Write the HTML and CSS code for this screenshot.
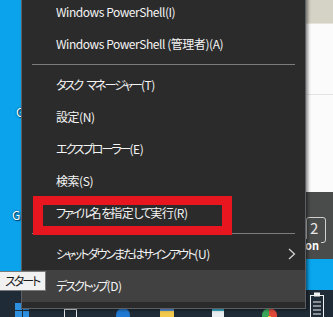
FILE: index.html
```html
<!DOCTYPE html>
<html lang="ja">
	<head>
		<meta charset="UTF-8" />
		<title>Start context menu</title>
		<link rel="stylesheet" href="styles.css">
	</head>

	<body>
		<div class="desktop">
			<div class="desk-label first">G</div>
			<div class="desk-label second">Ge</div>

			<div class="back-window">
				<div class="bw-top"></div>
				<div class="bw-page"></div>
				<div class="bw-photo">
					<span class="bw-card">2</span>
					<span class="bw-caption">on</span>
				</div>
				<div class="bw-band"></div>
			</div>

			<div class="taskbar">
				<span class="tb-icon win"><i></i><i></i><i></i><i></i></span>
				<span class="tb-icon view"></span>
				<span class="tb-icon edge"></span>
				<span class="tb-icon folder"></span>
				<span class="tb-icon store"></span>
				<span class="tb-icon chrome"></span>
				<span class="tb-icon clip">
					<svg width="16" height="27" viewBox="0 0 16 27">
						<rect x="1.5" y="4.5" width="13" height="22" fill="none" stroke="#f2f2f2" />
						<rect x="5" y="1.5" width="6" height="4" fill="#f2f2f2" />
						<path d="M4 11h8M4 15h8M4 19h8M4 23h8" stroke="#f2f2f2" />
					</svg>
				</span>
			</div>

			<div class="menu">
				<div class="item">Windows PowerShell(I)</div>
				<div class="item">Windows PowerShell (管理者)(A)</div>
				<div class="sep"></div>
				<div class="item"><span class="kana">タスク</span> <span class="kana word">マネージャー</span>(T)</div>
				<div class="item">設定(N)</div>
				<div class="item"><span class="kana">エクスプローラー</span>(E)</div>
				<div class="item">検索(S)</div>
				<div class="item"><span class="kana">ファイル</span>名<span class="kana">を</span>指定<span class="kana">して</span>実行(R)</div>
				<div class="sep"></div>
				<div class="item has-sub">
					<span><span class="kana">シャットダウンまたはサインアウト</span>(U)</span>
					<svg class="chev" width="8" height="12" viewBox="0 0 8 12">
						<path d="M1 1l5.5 5-5.5 5" fill="none" stroke="#d8d8d8" stroke-width="1.2" />
					</svg>
				</div>
				<div class="item active"><span class="kana">デスクトップ</span>(D)</div>
			</div>

			<div class="mark"></div>
			<div class="tooltip"><span class="kana">スタート</span></div>
		</div>
	</body>
</html>
```

FILE: styles.css
```css
:root {
	--desk-blue:  #0ba4ec;
	--menu-bg:    #2b2b2b;
	--menu-hover: #414141;
	--menu-fg:    #f4f4f4;
	--rule:       #7c7c7c;
	--mark-red:   #e8161f;
	--taskbar:    #1f2b36;
}

html, body {
	margin: 0;
	padding: 0;
}

body {
	font-family: "Noto Sans CJK JP", "Noto Sans", sans-serif;
	font-feature-settings: "palt";
}

/* Yu Gothic UI kana are much narrower than Noto's */
.kana {
	letter-spacing: -2px;
}
.kana.word {
	margin-left: 2px;
}

.desktop {
	position: relative;
	width: 333px;
	height: 317px;
	overflow: hidden;
	background: var(--desk-blue);
}

/* desktop icon captions, cut off by the menu */
.desk-label {
	position: absolute;
	font-size: 12px;
	line-height: 14px;
	color: #fff;
	text-shadow: 0 0 2px #003a60, 1px 1px 1px #003a60;
}
.desk-label.first {
	left: 16px;
	top: 105px;
}
.desk-label.second {
	left: 12px;
	top: 208px;
}

/* window behind the menu on the right */
.back-window {
	position: absolute;
	left: 300px;
	top: 0;
	width: 33px;
	height: 290px;
	display: flex;
	flex-direction: column;
}
.bw-top {
	height: 23px;
	background: #d5d2c6;
	border-bottom: 1px solid #e6e4dc;
}
.bw-page {
	height: 168px;
	background: #fbfbfb;
	background-image: linear-gradient(#e3e3e3, #e3e3e3);
	background-size: 100% 1px;
	background-position: 0 70px;
	background-repeat: no-repeat;
}
.bw-photo {
	height: 67px;
	background: #4a4b4b;
	position: relative;
}
.bw-card {
	position: absolute;
	left: 6px;
	top: 25px;
	width: 20px;
	height: 26px;
	border: 1px solid #d0d0d0;
	border-radius: 3px;
	color: #e6e6e6;
	font-size: 15px;
	line-height: 20px;
	padding-left: 3px;
	box-sizing: border-box;
}
.bw-caption {
	position: absolute;
	left: 5px;
	top: 47px;
	color: #fff;
	font-size: 11px;
	font-weight: bold;
	line-height: 12px;
	background: #4a4b4b;
	padding-right: 2px;
}
.bw-band {
	flex-grow: 1;
	background: #0aa6ee;
}

.taskbar {
	position: absolute;
	left: 0;
	right: 0;
	bottom: 0;
	height: 27px;
	background: var(--taskbar);
}
.tb-icon {
	position: absolute;
	display: block;
}
.tb-icon.win {
	left: 15px;
	top: 13px;
	width: 14px;
	height: 14px;
	display: grid;
	grid-template-columns: 1fr 1fr;
	gap: 1px;
}
.tb-icon.win i {
	background: #2d8fe0;
}
.tb-icon.view {
	left: 64px;
	top: 19px;
	width: 11px;
	height: 10px;
	border: 1px solid #e8e8e8;
}
.tb-icon.edge {
	left: 116px;
	top: 18px;
	width: 14px;
	height: 14px;
	border-radius: 50%;
	background: #1f78d1;
}
.tb-icon.folder {
	left: 160px;
	top: 18px;
	width: 14px;
	height: 12px;
	background: #f2c94c;
	border-top: 3px solid #5a8fd8;
}
.tb-icon.store {
	left: 212px;
	top: 18px;
	width: 12px;
	height: 12px;
	background: #e9eef2;
	border-top: 3px solid #3ab0c9;
}
.tb-icon.chrome {
	left: 262px;
	top: 18px;
	width: 15px;
	height: 15px;
	border-radius: 50%;
	background: conic-gradient(#e04a3a 0 120deg, #f2c12e 120deg 240deg, #3aa65a 240deg);
}
.tb-icon.clip {
	left: 309px;
	top: 1px;
}

/* the context menu itself */
.menu {
	position: absolute;
	left: 21px;
	top: -5px;
	width: 283px;
	padding-bottom: 6px;
	background: var(--menu-bg);
	border: 1px solid #5c5f63;
	box-shadow: 2px 1px 3px rgba(0, 0, 0, .45);
	color: var(--menu-fg);
	font-size: 12px;
	letter-spacing: -0.45px;
}
.item {
	height: 32px;
	line-height: 32px;
	padding-left: 34px;
	padding-right: 9px;
	white-space: nowrap;
}
.item.has-sub {
	display: flex;
	align-items: center;
	justify-content: space-between;
}
.item.active {
	background: var(--menu-hover);
}
.chev {
	display: block;
}
.sep {
	height: 9px;
	background: linear-gradient(var(--rule), var(--rule)) 10px 4px / calc(100% - 20px) 1px no-repeat;
}

/* red annotation box drawn over the screenshot */
.mark {
	position: absolute;
	left: 33px;
	top: 196px;
	width: 199px;
	height: 39px;
	box-sizing: border-box;
	border: 9px solid var(--mark-red);
	border-left-width: 10px;
	border-right-width: 10px;
}

.tooltip {
	position: absolute;
	left: 0;
	top: 271px;
	width: 46px;
	height: 20px;
	box-sizing: border-box;
	background: #f1f1f1;
	border: 1px solid #7a7a7a;
	border-left: none;
	color: #1a1a1a;
	font-size: 12px;
	line-height: 18px;
	padding-left: 5px;
	white-space: nowrap;
}
```
